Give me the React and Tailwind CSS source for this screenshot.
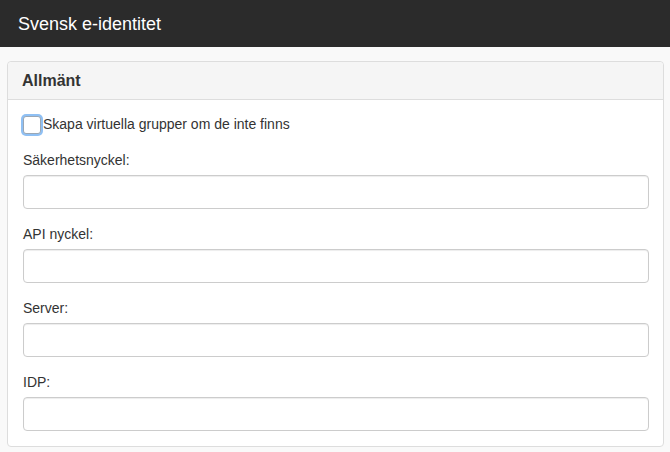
export default function App() {
  const fields = ["Säkerhetsnyckel:", "API nyckel:", "Server:", "IDP:"];
  return (
    <div className="min-h-[452px] bg-[#f9f9f9] text-[#333]" style={{ fontFamily: '"Liberation Sans", Arial, sans-serif' }}>
      <div className="h-[47px] bg-[#2b2b2b] flex items-center px-[18px]">
        <span className="text-white text-[18px] leading-none">Svensk e-identitet</span>
      </div>
      <div className="px-[7px] pt-[14px]">
        <div className="bg-white border border-[#dddddd] rounded-[4px] w-[657px]">
          <div className="h-[38px] bg-[#f5f5f5] border-b border-[#dddddd] rounded-t-[4px] flex items-center px-[14px]">
            <span className="font-bold text-[16px] text-[#333]">Allmänt</span>
          </div>
          <div className="px-[15px] pt-[15px] pb-[15px]">
            <label className="flex items-center h-[19px] text-[14px]">
              <span className="w-[18px] h-[18px] rounded-[3px] border border-[#9aa7b5] bg-white shadow-[0_0_0_2px_#8fc0f4] mr-[2px]" />
              <span>Skapa virtuella grupper om de inte finns</span>
            </label>
            <div className="flex flex-col">
              {fields.map((f, i) => (
                <div key={f} className={i === 0 ? "mt-[16px]" : "mt-[15px]"}>
                  <div className="text-[14px] leading-[20px] h-[20px]">{f}</div>
                  <div className="mt-[5px] h-[34px] w-[626px] border border-[#cccccc] rounded-[4px] bg-white shadow-[inset_0_1px_1px_rgba(0,0,0,0.075)]" />
                </div>
              ))}
            </div>
          </div>
        </div>
      </div>
    </div>
  );
}
